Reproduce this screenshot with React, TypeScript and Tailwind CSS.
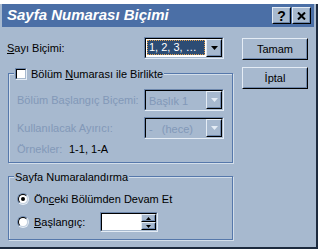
import type { ReactNode } from 'react'

const font = { fontFamily: '"Liberation Sans", Arial, sans-serif' }

function Raised({ className, children }: { className: string; children?: ReactNode }) {
  return (
    <div className={`border border-t-[#e4ecf5] border-l-[#e4ecf5] border-b-black border-r-black ${className}`}>
      <div className="flex h-full w-full items-center justify-center border border-transparent border-b-[#6e88ad] border-r-[#6e88ad]">
        {children}
      </div>
    </div>
  )
}

function Sunken({ className, children, inner }: { className: string; children?: ReactNode; inner: string }) {
  return (
    <div className={`shrink-0 border border-t-[#6e88ad] border-l-[#6e88ad] border-b-[#e4ecf5] border-r-[#e4ecf5] ${className}`}>
      <div className={`flex h-full w-full border border-t-black border-l-black border-b-[#a7b9cf] border-r-[#a7b9cf] ${inner}`}>
        {children}
      </div>
    </div>
  )
}

function Arrow({ disabled }: { disabled?: boolean }) {
  return (
    <Raised className="h-full w-[16px] shrink-0 bg-[#a7b9cf]">
      <svg width="7" height="4" viewBox="0 0 7 4">
        <path d="M0 0h7L3.5 4z" fill={disabled ? '#e4ecf5' : '#000'} />
      </svg>
    </Raised>
  )
}

function Combo({ text, disabled }: { text: string; disabled?: boolean }) {
  return (
    <Sunken className="h-[22px] w-[80px]" inner={disabled ? 'bg-[#a7b9cf]' : 'bg-white'}>
      <div className="flex min-w-0 flex-1 items-start p-[1px]">
        {disabled ? (
          <span className="pl-[2px] pt-[2px] text-[11px] leading-[14px] whitespace-pre text-[#8298b8]">{text}</span>
        ) : (
          <span className="flex h-[15px] w-full items-center whitespace-nowrap border border-dotted border-[#e0a050] bg-[#2c4c74] pl-[1px] text-[11px] text-white">
            {text}
          </span>
        )}
      </div>
      <Arrow disabled={disabled} />
    </Sunken>
  )
}

function Group({ className, legend, children }: { className: string; legend: ReactNode; children: ReactNode }) {
  return (
    <div className={`relative border border-[#5678ab] shadow-[inset_1px_1px_0_#d3deea,1px_1px_0_#d3deea] ${className}`}>
      <div className="absolute -top-[7px] left-[5px] flex items-center whitespace-nowrap bg-[#a7b9cf] px-[1px] text-[11px] leading-[14px]">
        {legend}
      </div>
      {children}
    </div>
  )
}

function Radio({ checked }: { checked?: boolean }) {
  return (
    <div className="flex h-[12px] w-[12px] shrink-0 items-center justify-center rounded-full border border-t-[#6e88ad] border-l-[#6e88ad] border-b-[#e4ecf5] border-r-[#e4ecf5]">
      <div className="flex h-[10px] w-[10px] items-center justify-center rounded-full border border-t-black border-l-black border-b-[#c4d1e0] border-r-[#c4d1e0] bg-white">
        {checked && <div className="h-[4px] w-[4px] rounded-full bg-black" />}
      </div>
    </div>
  )
}

export default function App() {
  return (
    <div className="flex h-[249px] w-[320px] flex-col bg-white text-black" style={font}>
      <div className="h-[4px] w-full bg-white" />
      <div className="flex h-[245px] w-[318px] flex-col border-b-2 border-r-2 border-b-[#1c2a3e] border-r-[#1c2a3e] bg-[#a7b9cf]">
        <div className="mx-[2px] flex h-[23px] items-center justify-between bg-[#4b6fa6] pl-[5px] pr-[3px]">
          <span className="text-[15px] font-bold italic text-white">Sayfa Numarası Biçimi</span>
          <div className="flex gap-[1px]">
            <Raised className="h-[17px] w-[19px] bg-[#a7b9cf]">
              <span className="text-[14px] font-bold leading-none">?</span>
            </Raised>
            <Raised className="h-[17px] w-[19px] bg-[#a7b9cf]">
              <svg width="9" height="8" viewBox="0 0 9 8">
                <path d="M1 0.5l7 7M8 0.5l-7 7" stroke="#000" strokeWidth="2" />
              </svg>
            </Raised>
          </div>
        </div>

        <div className="flex flex-1">
          <div className="ml-[7px] mt-[10px] flex w-[226px] flex-col">
            <div className="flex h-[22px] items-center">
              <span className="w-[137px] shrink-0 whitespace-nowrap text-[11px]">
                <u>S</u>ayı Biçimi:
              </span>
              <Combo text="1, 2, 3, …" />
            </div>

            <Group
              className="ml-[1px] mt-[14px] h-[90px] w-[225px]"
              legend={
                <>
                  <Sunken className="mr-[4px] h-[12px] w-[12px]" inner="bg-white" />
                  <span>
                    Bölüm <u>N</u>umarası ile Birlikte
                  </span>
                </>
              }
            >
              <div className="flex flex-col pl-[8px] pt-[15px] text-[11px] text-[#8298b8]">
                <div className="flex h-[22px] items-center">
                  <span className="w-[127px] shrink-0 whitespace-nowrap">Bölüm Başlangıç Biçemi:</span>
                  <Combo text="Başlık 1" disabled />
                </div>
                <div className="mt-[6px] flex h-[22px] items-center">
                  <span className="w-[127px] shrink-0 whitespace-nowrap">Kullanılacak Ayırıcı:</span>
                  <Combo text="-   (hece)" disabled />
                </div>
                <div className="mt-[2px] flex h-[16px] items-center">
                  <span className="w-[52px]">Örnekler:</span>
                  <span className="text-black">1-1, 1-A</span>
                </div>
              </div>
            </Group>

            <Group className="ml-[1px] mt-[13px] h-[64px] w-[225px]" legend={<span>Sayfa Numaralandırma</span>}>
              <div className="flex flex-col pl-[8px] pt-[14px] text-[11px]">
                <div className="flex h-[16px] items-center gap-[5px]">
                  <Radio checked />
                  <span>
                    Ön<u>c</u>eki Bölümden Devam Et
                  </span>
                </div>
                <div className="mt-[5px] flex h-[20px] items-center">
                  <Radio />
                  <span className="ml-[5px] w-[66px]">
                    <u>B</u>aşlangıç:
                  </span>
                  <Sunken className="h-[20px] w-[58px]" inner="bg-white">
                    <div className="flex-1" />
                    <div className="flex w-[15px] flex-col">
                      <Raised className="h-[8px] w-full bg-[#a7b9cf]">
                        <svg width="5" height="3" viewBox="0 0 5 3">
                          <path d="M2.5 0L5 3H0z" fill="#000" />
                        </svg>
                      </Raised>
                      <Raised className="h-[8px] w-full bg-[#a7b9cf]">
                        <svg width="5" height="3" viewBox="0 0 5 3">
                          <path d="M0 0h5L2.5 3z" fill="#000" />
                        </svg>
                      </Raised>
                    </div>
                  </Sunken>
                </div>
              </div>
            </Group>
          </div>

          <div className="ml-[9px] mt-[11px] flex flex-col gap-[7px]">
            <Raised className="h-[22px] w-[66px] bg-[#a7b9cf]">
              <span className="text-[11px]">Tamam</span>
            </Raised>
            <Raised className="h-[22px] w-[66px] bg-[#a7b9cf]">
              <span className="text-[11px]">İptal</span>
            </Raised>
          </div>
        </div>
      </div>
    </div>
  )
}
